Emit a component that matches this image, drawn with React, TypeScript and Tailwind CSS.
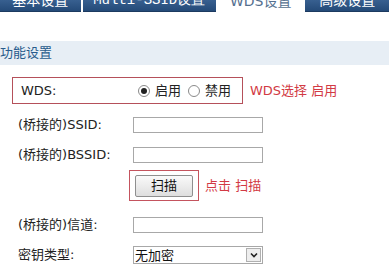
import { useState } from 'react'

const font = { fontFamily: '"DejaVu Sans", "Noto Sans CJK SC", sans-serif' }

function Tab({ label, active, className }: { label: string; active?: boolean; className: string }) {
  return (
    <div
      className={`flex h-[22px] items-center justify-center text-[14px] ${className} ${
        active ? 'bg-white text-[#55708f]' : 'bg-gradient-to-b from-[#4a74a6] to-[#244a78] text-white border-b border-[#1c3a60]'
      }`}
    >
      {label}
    </div>
  )
}

function Radio({ checked }: { checked?: boolean }) {
  return (
    <span className="flex h-[12px] w-[12px] items-center justify-center rounded-full border border-[#8a8a8a] bg-white">
      {checked && <span className="h-[6px] w-[6px] rounded-full bg-[#222]" />}
    </span>
  )
}

function Row({ label, children }: { label: string; children: React.ReactNode }) {
  return (
    <div className="flex h-[30px] items-center">
      <div className="w-[133px] pl-[18px] text-[13px] text-[#222]">{label}</div>
      {children}
    </div>
  )
}

function TextInput() {
  return <div className="h-[16px] w-[130px] border border-[#a8a8a8] bg-white" />
}

export default function App() {
  const [wds, setWds] = useState(true)
  return (
    <div className="h-[275px] w-[389px] overflow-hidden bg-white" style={font}>
      {/* Tabs */}
      <div className="h-[12px] overflow-hidden">
        <div className="-mt-[10px] flex gap-[2px]">
          <Tab label="基本设置" className="w-[81px]" />
          <Tab label="Multi-SSID设置" className="w-[134px] font-mono" />
          <Tab label="WDS设置" active className="w-[86px]" />
          <Tab label="高级设置" className="w-[84px]" />
        </div>
      </div>

      <div className="h-[29px]" />

      {/* Section header */}
      <div className="flex h-[24px] items-center bg-[#e7eef5] text-[13px] text-[#275b8c]">功能设置</div>

      {/* WDS row */}
      <div className="flex items-center pt-[12px] pb-[6px]">
        <div className="ml-[12px] flex h-[27px] w-[231px] items-center border border-[#b5505a] bg-white">
          <span className="w-[125px] pl-[8px] text-[13px] text-[#222]">WDS:</span>
          <button className="flex items-center gap-[5px]" onClick={() => setWds(true)}>
            <Radio checked={wds} />
            <span className="text-[13px] text-[#222]">启用</span>
          </button>
          <button className="ml-[7px] flex items-center gap-[5px]" onClick={() => setWds(false)}>
            <Radio checked={!wds} />
            <span className="text-[13px] text-[#222]">禁用</span>
          </button>
        </div>
        <span className="ml-[7px] text-[13px] text-[#d23a44]">WDS选择 启用</span>
      </div>

      <Row label="(桥接的)SSID:">
        <TextInput />
      </Row>
      <Row label="(桥接的)BSSID:">
        <TextInput />
      </Row>

      {/* Scan */}
      <div className="flex items-center">
        <div className="ml-[129px] flex h-[31px] w-[70px] items-center justify-center border border-[#c4545e]">
          <button className="flex h-[22px] w-[58px] items-center justify-center rounded-[2px] border border-[#8f8f8f] bg-gradient-to-b from-[#fafafa] to-[#dedede] text-[13px] text-[#111]">
            扫描
          </button>
        </div>
        <span className="ml-[6px] text-[13px] text-[#d23a44]">点击 扫描</span>
      </div>

      <div className="h-[9px]" />
      <Row label="(桥接的)信道:">
        <TextInput />
      </Row>
      <Row label="密钥类型:">
        <div className="flex h-[18px] w-[130px] items-center border border-[#a8a8a8] bg-white">
          <span className="flex-1 pl-[1px] text-[13px] leading-none text-[#111]">无加密</span>
          <span className="mr-[1px] flex h-[14px] w-[15px] items-center justify-center border border-[#b0b0b0] bg-[#eeeeee]">
            <svg width="8" height="6" viewBox="0 0 8 6">
              <path d="M1 1.5 L4 4.5 L7 1.5" fill="none" stroke="#222" strokeWidth="1.6" />
            </svg>
          </span>
        </div>
      </Row>
    </div>
  )
}
